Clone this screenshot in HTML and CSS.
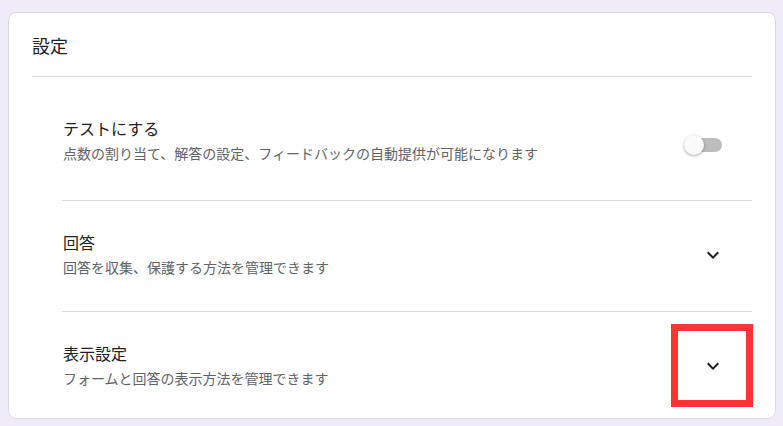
FILE: index.html
```html
<!DOCTYPE html>
<html lang="ja">
<head>
    <meta charset="UTF-8">
    <meta name="viewport" content="width=device-width, initial-scale=1.0">
    <title>設定</title>
    <link rel="stylesheet" href="styles.css">
</head>
<body>
    <div class="card">
        <div class="card-header">設定</div>
        <div class="settings">
            <div class="row first">
                <div class="row-text">
                    <div class="row-title">テストにする</div>
                    <div class="row-desc">点数の割り当て、解答の設定、フィードバックの自動提供が可能になります</div>
                </div>
                <div class="switch" role="switch" aria-checked="false">
                    <span class="switch-track"></span>
                    <span class="switch-thumb"></span>
                </div>
            </div>
            <div class="row">
                <div class="row-text">
                    <div class="row-title">回答</div>
                    <div class="row-desc">回答を収集、保護する方法を管理できます</div>
                </div>
                <button class="expand" aria-label="展開">
                    <svg viewBox="0 0 24 24" width="24" height="24"><path d="M16.59 8.59L12 13.17 7.41 8.59 6 10l6 6 6-6z"/></svg>
                </button>
            </div>
            <div class="row last">
                <div class="row-text">
                    <div class="row-title">表示設定</div>
                    <div class="row-desc">フォームと回答の表示方法を管理できます</div>
                </div>
                <button class="expand" aria-label="展開">
                    <svg viewBox="0 0 24 24" width="24" height="24"><path d="M16.59 8.59L12 13.17 7.41 8.59 6 10l6 6 6-6z"/></svg>
                </button>
                <div class="highlight"></div>
            </div>
        </div>
    </div>
</body>
</html>
```

FILE: styles.css
```css
body {
    margin: 0;
    padding: 12px 7px 0 8px;
    background-color: #f0ebf8;
    font-family: Roboto, "Noto Sans CJK JP", sans-serif;
    color: #202124;
}

.card {
    box-sizing: border-box;
    width: 768px;
    height: 407px;
    background-color: #fff;
    border: 1px solid #dadce0;
    border-radius: 8px;
    padding: 0 23px 0 23px;
    overflow: hidden;
}

.card-header {
    padding: 22px 0 17px;
    font-size: 18px;
    line-height: 24px;
    border-bottom: 1px solid #dadce0;
}

.settings {
    margin-left: 30px;
}

.row {
    position: relative;
    display: flex;
    align-items: center;
    border-top: 1px solid #dadce0;
    padding: 30px 0 32px;
}

.row.first {
    border-top: none;
    padding: 41px 0 36px;
}

.row.last {
    padding-bottom: 28px;
}

.row-text {
    flex: 1;
    padding-left: 1px;
}

.row-title {
    font-size: 16px;
    line-height: 24px;
    color: #202124;
}

.row-desc {
    margin-top: 2px;
    font-size: 14px;
    line-height: 20px;
    color: #5f6368;
}

.switch {
    position: relative;
    width: 38px;
    height: 20px;
    margin-right: 30px;
    margin-top: 8px;
}

.switch-track {
    position: absolute;
    left: 2px;
    top: 3px;
    width: 36px;
    height: 14px;
    border-radius: 7px;
    background-color: #bdbdbd;
}

.switch-thumb {
    position: absolute;
    left: 0;
    top: 0;
    width: 20px;
    height: 20px;
    border-radius: 50%;
    background-color: #fafafa;
    box-shadow: 0 1px 3px rgba(0, 0, 0, 0.35);
}

.expand {
    display: flex;
    align-items: center;
    justify-content: center;
    width: 48px;
    height: 48px;
    margin-right: 15px;
    padding: 0;
    border: none;
    background: none;
    cursor: pointer;
}

.expand svg {
    fill: #202124;
}

.highlight {
    position: absolute;
    left: 609px;
    top: 12px;
    box-sizing: border-box;
    width: 82px;
    height: 83px;
    border: 7px solid #ff3333;
}
```
